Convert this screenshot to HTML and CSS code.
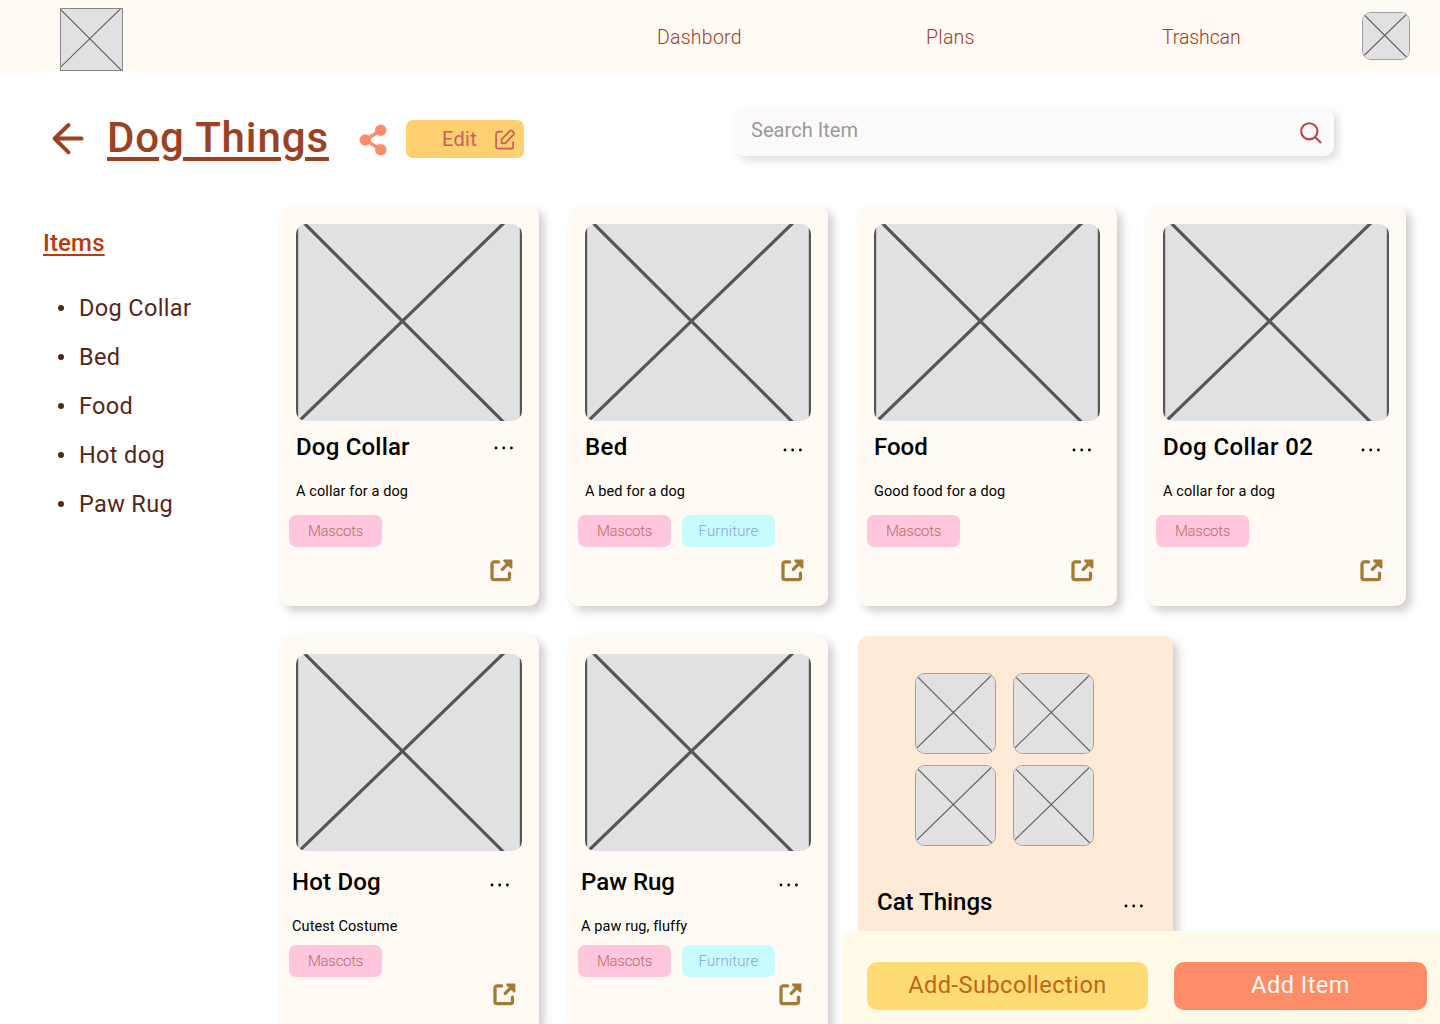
FILE: index.html
```html
<!DOCTYPE html>
<html lang="en">
<head>
<meta charset="utf-8">
<title>Dog Things</title>
<link rel="stylesheet" href="styles.css">
</head>
<body>
<svg class="sprite" aria-hidden="true">
  <symbol id="thumb" viewBox="0 0 63 63" preserveAspectRatio="none">
    <rect width="63" height="63" fill="#e1e1e1"/>
    <path d="M0 1L62 63M0 59.6L61.2 0" fill="none" stroke="#5e5f61" stroke-width="1.1" vector-effect="non-scaling-stroke"/>
  </symbol>
  <symbol id="photo" viewBox="0 0 226 197">
    <rect width="226" height="197" fill="#e1e1e1"/>
    <path d="M6-3L209.5 200M-1 201L210-3" fill="none" stroke="#555658" stroke-width="3.2"/>
    <path d="M1 0V197M225 0V197" stroke="#555658" stroke-width="2.4"/>
  </symbol>
  <symbol id="open" viewBox="0 0 23 23">
    <path d="M8.6 2.9H4.2a2.2 2.2 0 0 0-2.2 2.2v13.3a2.2 2.2 0 0 0 2.2 2.2h13.1a2.2 2.2 0 0 0 2.2-2.2v-4.2M12.3 10.4L19 3.7" fill="none" stroke="#a67a35" stroke-width="3.3" stroke-linecap="round"/>
    <path d="M14.2 1.7H21.3V8.4M14.2 1.7L21.3 8.4" fill="#a67a35" stroke="#a67a35" stroke-width="2.2" stroke-linecap="round"/>
  </symbol>
  <symbol id="dots" viewBox="0 0 20 4">
    <path d="M2 2h.01M9.7 2h.01M17.4 2h.01" stroke="#000" stroke-width="2.8" stroke-linecap="round"/>
  </symbol>
</svg>

<header class="topbar">
  <svg class="logo"><use href="#thumb"/></svg>
  <nav class="nav">
    <a class="nav-dash">Dashbord</a>
    <a class="nav-plans">Plans</a>
    <a class="nav-trash">Trashcan</a>
  </nav>
  <svg class="avatar"><use href="#thumb"/></svg>
</header>

<section class="toolbar">
  <svg class="back" viewBox="0 0 34 34"><path d="M29.6 16.5H2.8M16.5 3L2.6 16.5l13.9 13.8" fill="none" stroke="#9d4123" stroke-width="3.9" stroke-linecap="round" stroke-linejoin="round"/></svg>
  <h1 class="title">Dog Things</h1>
  <svg class="share" viewBox="0 0 28 32"><g fill="#ff8c69"><circle cx="6.3" cy="16" r="5.8"/><circle cx="21.7" cy="6.3" r="5.7"/><circle cx="21.7" cy="25.6" r="5.7"/></g><path d="M21.7 6.3L6.3 16l15.4 9.6" fill="none" stroke="#ff8c69" stroke-width="3.4"/></svg>
  <button class="edit">Edit
    <svg viewBox="0 0 21 21"><path d="M7.2 2.7H3.1A2 2 0 0 0 1.1 4.7v13a2 2 0 0 0 2 2h13a2 2 0 0 0 2-2v-4.5M6.6 14.3v-4L15 1.7a1.2 1.2 0 0 1 1.7 0l2 2a1.2 1.2 0 0 1 0 1.7L10.2 14.3z" fill="none" stroke="#cd5c5c" stroke-width="1.7" stroke-linecap="round" stroke-linejoin="round"/></svg>
  </button>
  <div class="search"><span>Search Item</span>
    <svg viewBox="0 0 22 22"><circle cx="9.3" cy="9.3" r="8.1" fill="none" stroke="#b94545" stroke-width="2.1"/><path d="M15 15l6 6" stroke="#b94545" stroke-width="2.1"/></svg>
  </div>
</section>

<main class="main">
  <aside class="sidebar">
    <h2>Items</h2>
    <ul>
      <li>Dog Collar</li>
      <li>Bed</li>
      <li>Food</li>
      <li>Hot dog</li>
      <li>Paw Rug</li>
    </ul>
  </aside>
  <div class="board">
    <div class="row">
      <article class="card first">
        <svg class="photo"><use href="#photo"/></svg>
        <div class="head"><h3>Dog Collar</h3><svg class="dots"><use href="#dots"/></svg></div>
        <p>A collar for a dog</p>
        <div class="tags"><span class="tag pink">Mascots</span></div>
        <svg class="open"><use href="#open"/></svg>
      </article>
      <article class="card second">
        <svg class="photo"><use href="#photo"/></svg>
        <div class="head"><h3 class="wide">Bed</h3><svg class="dots"><use href="#dots"/></svg></div>
        <p>A bed for a dog</p>
        <div class="tags"><span class="tag pink">Mascots</span><span class="tag cyan">Furniture</span></div>
        <svg class="open"><use href="#open"/></svg>
      </article>
      <article class="card">
        <svg class="photo"><use href="#photo"/></svg>
        <div class="head"><h3 class="tight">Food</h3><svg class="dots"><use href="#dots"/></svg></div>
        <p>Good food for a dog</p>
        <div class="tags"><span class="tag pink">Mascots</span></div>
        <svg class="open"><use href="#open"/></svg>
      </article>
      <article class="card">
        <svg class="photo"><use href="#photo"/></svg>
        <div class="head"><h3 class="wide">Dog Collar 02</h3><svg class="dots"><use href="#dots"/></svg></div>
        <p>A collar for a dog</p>
        <div class="tags"><span class="tag pink">Mascots</span></div>
        <svg class="open"><use href="#open"/></svg>
      </article>
    </div>
    <div class="row">
      <article class="card lower">
        <svg class="photo"><use href="#photo"/></svg>
        <div class="head"><h3>Hot Dog</h3><svg class="dots"><use href="#dots"/></svg></div>
        <p>Cutest Costume</p>
        <div class="tags"><span class="tag pink">Mascots</span></div>
        <svg class="open"><use href="#open"/></svg>
      </article>
      <article class="card lower paw">
        <svg class="photo"><use href="#photo"/></svg>
        <div class="head"><h3 class="tight">Paw Rug</h3><svg class="dots"><use href="#dots"/></svg></div>
        <p>A paw rug, fluffy</p>
        <div class="tags"><span class="tag pink">Mascots</span><span class="tag cyan">Furniture</span></div>
        <svg class="open"><use href="#open"/></svg>
      </article>
      <article class="collection">
        <div class="thumbs">
          <svg><use href="#thumb"/></svg>
          <svg><use href="#thumb"/></svg>
          <svg><use href="#thumb"/></svg>
          <svg><use href="#thumb"/></svg>
        </div>
        <div class="head"><h3 class="tight">Cat Things</h3><svg class="dots"><use href="#dots"/></svg></div>
      </article>
    </div>
  </div>
</main>

<footer class="actions">
  <button class="add-sub">Add-Subcollection</button>
  <button class="add-item">Add Item</button>
</footer>
</body>
</html>
```

FILE: styles.css
```css
* { box-sizing: border-box; margin: 0; padding: 0; }

body {
  height: 1024px;
  overflow: hidden;
  background: #fff;
  font-family: Roboto, "Liberation Sans", sans-serif;
}

svg { display: block; flex: none; }
button { border: 0; font-family: inherit; }
.sprite { position: absolute; width: 0; height: 0; }

/* Top bar */
.topbar { display: flex; height: 72px; padding-left: 60px; background: #fffaf3; }
.logo { width: 63px; height: 63px; margin-top: 8px; border: 1px solid #858587; }
.nav { display: flex; margin-left: 534px; width: 705px; }
.nav a { font-size: 19.5px; font-weight: 350; line-height: 75px; color: #9d4123; letter-spacing: .25px; white-space: nowrap; }
.nav-dash { width: 269px; }
.nav-plans { width: 236px; }
.nav .nav-trash { letter-spacing: -.1px; }
.avatar { width: 48px; height: 48px; margin-top: 12px; border: 1px solid #a0a0a0; border-radius: 9px; }

/* Title row */
.toolbar { display: flex; align-items: flex-start; height: 134px; padding: 36px 0 0 52px; }
.back { width: 34px; height: 34px; margin-top: 14px; }
.title {
  width: 222px;
  margin: 5px 0 0 21px;
  font-size: 42px;
  font-weight: 500;
  line-height: 50px;
  letter-spacing: .9px;
  white-space: nowrap;
  color: #9d4123;
  text-decoration: underline;
  text-decoration-thickness: 4px;
  text-underline-offset: 5px;
}
.share { width: 28px; height: 32px; margin: 16px 0 0 30px; }
.edit {
  display: flex;
  align-items: center;
  justify-content: space-between;
  width: 118px;
  height: 38px;
  margin: 12px 0 0 19px;
  padding: 0 8px 0 36px;
  border-radius: 7px;
  background: #ffd070;
  color: #cd5c5c;
  font-size: 20px;
  letter-spacing: .3px;
}
.edit svg { width: 21px; height: 21px; }
.search {
  display: flex;
  justify-content: space-between;
  width: 600px;
  height: 48px;
  margin-left: 210px;
  padding: 0 12px 0 17px;
  border-radius: 10px;
  background: #fcfafb;
  box-shadow: 4px 4px 8px rgba(0, 0, 0, .14);
  color: #999;
  font-size: 20px;
  line-height: 45px;
  letter-spacing: .05px;
}
.search svg { width: 22px; height: 22px; margin-top: 14px; }

/* Sidebar */
.main { display: flex; height: 818px; }
.sidebar { width: 280px; flex: none; padding: 22px 0 0 43px; }
.sidebar h2 {
  color: #b93a0c;
  font-size: 24px;
  font-weight: 500;
  line-height: 30px;
  letter-spacing: .15px;
  text-decoration: underline;
  text-decoration-thickness: 2px;
  text-underline-offset: 3px;
}
.sidebar ul { margin-top: 25px; list-style: none; }
.sidebar li {
  display: flex;
  align-items: center;
  height: 49px;
  padding-left: 15px;
  color: #54271a;
  font-size: 23.5px;
  letter-spacing: .35px;
}
.sidebar li::before { width: 6px; height: 6px; margin-right: 15px; border-radius: 50%; background: currentColor; content: ""; }

/* Cards */
.row { display: flex; align-items: flex-start; gap: 30px; }
.row + .row { margin-top: 30px; }
.card {
  display: flex;
  flex-direction: column;
  width: 259px;
  height: 400px;
  padding-top: 18px;
  border-radius: 10px;
  background: #fffaf3;
  box-shadow: 5px 5px 10px rgba(0, 0, 0, .2);
}
.photo { width: 226px; height: 197px; margin-left: 16px; border-radius: 10px; }
.head { display: flex; justify-content: space-between; height: 30px; margin: 11px 25px 0 16px; }
h3 { font-size: 24px; font-weight: 500; line-height: 30px; letter-spacing: .2px; white-space: nowrap; }
h3.wide { letter-spacing: .4px; }
h3.tight { letter-spacing: 0; }
.dots { width: 20px; height: 4px; margin-top: 16px; }
.first .dots { margin-top: 14px; }
.card p { height: 20px; margin: 20px 0 0 16px; font-size: 14.5px; font-weight: 400; line-height: 20px; letter-spacing: .1px; }
.tags { display: flex; gap: 11px; margin: 13px 0 0 9px; }
.tag { width: 93px; height: 32px; border-radius: 7px; font-size: 15px; font-weight: 300; line-height: 32px; letter-spacing: -.3px; text-align: center; }
.pink { background: #ffc6de; color: #b96b6b; }
.cyan { background: #c7fcff; color: #8f9fd6; letter-spacing: .1px; }
.open { width: 23px; height: 23px; margin: 12px 0 0 213px; }
.first .open { margin-left: 210px; }
.second .open { margin-left: 212px; }
.lower { height: 388px; border-radius: 10px 10px 0 0; }
.lower .head { margin: 16px 29px 0 12px; }
.lower p { margin-left: 12px; }
.lower .tags { margin-top: 8px; }
.lower .open { margin-top: 6px; }
.paw .open { margin-left: 210px; }

.collection {
  width: 315px;
  height: 388px;
  padding-top: 37px;
  border-radius: 10px 10px 0 0;
  background: #feebd7;
  box-shadow: 5px 5px 10px rgba(0, 0, 0, .2);
}
.thumbs { display: grid; grid-template-columns: 81px 81px; gap: 11px 17px; margin-left: 57px; }
.thumbs svg { width: 81px; height: 81px; border: 1px solid #a3a09d; border-radius: 10px; }
.collection .head { margin: 41px 29px 0 19px; }
.collection .dots { margin-top: 17px; }

/* Bottom action bar, floats above the board */
.actions {
  position: fixed;
  right: 0;
  bottom: 0;
  display: flex;
  gap: 26px;
  width: 598px;
  height: 93px;
  padding: 31px 0 0 25px;
  border-radius: 10px 0 0 0;
  background: #fffbe8;
}
.actions button { height: 48px; padding-bottom: 3px; border-radius: 10px; font-size: 23.5px; letter-spacing: .5px; }
.add-sub { width: 281px; background: #ffdc73; color: #bf6516; }
.add-item { width: 253px; background: #ff8c69; color: #fffaf3; }
```
